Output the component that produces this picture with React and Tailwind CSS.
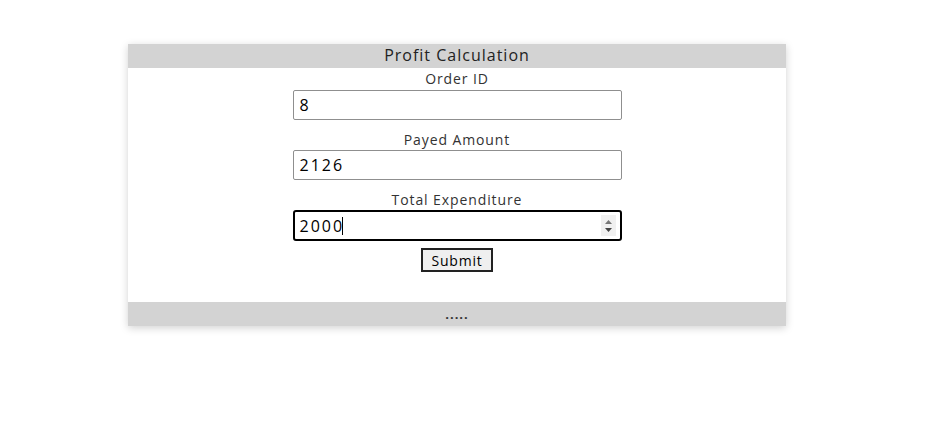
export default function App() {
  const font = { fontFamily: '"Open Sans", "Noto Sans", sans-serif' };
  return (
    <div className="w-[945px] h-[444px] bg-white" style={font}>
      <div className="pt-[44px] pl-[128px]">
        <div className="w-[658px] bg-white shadow-[0_2px_8px_rgba(0,0,0,0.18)] flex flex-col">
          <div className="h-[24px] pb-[2px] bg-[#d3d3d3] flex items-center justify-center text-[16px] tracking-[1px] text-[#222] leading-none">
            Profit Calculation
          </div>
          <div className="flex flex-col items-center">
            <div className="h-[20px] flex items-center text-[14px] tracking-[0.9px] text-[#333]">Order ID</div>
            <div className="mt-[2px] w-[329px] h-[30px] border border-[#8f8f8f] rounded-[2px] flex items-center px-[6px] text-[16px] tracking-[2px] text-black">
              8
            </div>
            <div className="mt-[9px] h-[20px] flex items-center text-[14px] tracking-[0.9px] text-[#333]">Payed Amount</div>
            <div className="mt-[1px] w-[329px] h-[30px] border border-[#8f8f8f] rounded-[2px] flex items-center px-[6px] text-[16px] tracking-[2px] text-black">
              2126
            </div>
            <div className="mt-[9px] h-[20px] flex items-center text-[14px] tracking-[0.9px] text-[#333]">Total Expenditure</div>
            <div className="mt-[1px] w-[329px] h-[31px] border-2 border-black rounded-[3px] flex items-center pl-[5px] pr-[4px] text-[16px] tracking-[2px] text-black">
              <span>2000</span>
              <span className="w-px h-[18px] bg-black -ml-[2px]"></span>
              <div className="ml-auto w-[15px] h-[21px] bg-[#f0f0f0] flex flex-col items-center justify-center gap-[4px]">
                <svg width="7" height="4" viewBox="0 0 7 4"><path d="M0 4 L3.5 0 L7 4 Z" fill="#777" /></svg>
                <svg width="7" height="4" viewBox="0 0 7 4"><path d="M0 0 L3.5 4 L7 0 Z" fill="#444" /></svg>
              </div>
            </div>
            <div className="mt-[7px] w-[72px] h-[24px] border-2 border-[#222] bg-[#efefef] flex items-center justify-center text-[14px] tracking-[0.8px] text-black">
              Submit
            </div>
            <div className="h-[30px]"></div>
          </div>
          <div className="h-[24px] bg-[#d3d3d3] flex items-center justify-center text-[13px] font-bold text-[#333] leading-none tracking-[1px]">
            .....
          </div>
        </div>
      </div>
    </div>
  );
}
